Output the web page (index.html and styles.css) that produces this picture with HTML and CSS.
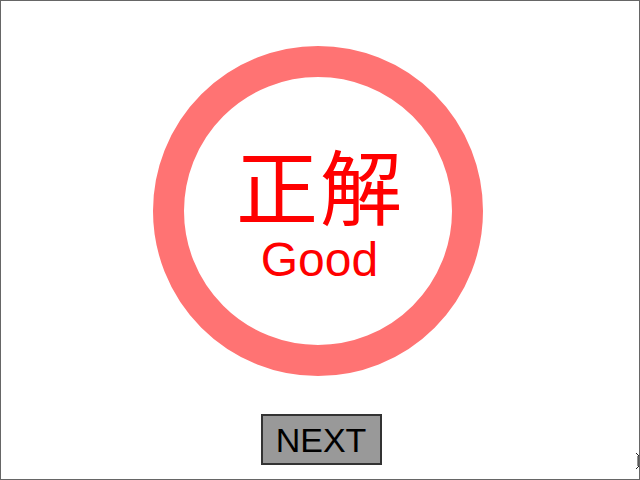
FILE: index.html
```html
<!DOCTYPE html>
<html lang="ja">
<head>
<meta charset="utf-8">
<title>正解</title>
<link rel="stylesheet" href="styles.css">
</head>
<body>
<div class="screen">
  <div class="ring">
    <div class="kanji">正解</div>
    <div class="good">Good</div>
  </div>
  <button class="next" type="button">NEXT</button>
  <svg class="cursor" width="6" height="18" viewBox="0 0 6 18" aria-hidden="true">
    <path d="M1 1 L4 4 L4 14 L1 17" fill="none" stroke="#222" stroke-width="1"/>
    <path d="M3 4 L3 14" stroke="#222" stroke-width="1"/>
  </svg>
</div>
</body>
</html>
```
FILE: styles.css
```css
html, body {
  margin: 0;
  padding: 0;
  background: #ffffff;
}
.screen {
  position: relative;
  width: 640px;
  height: 480px;
  box-sizing: border-box;
  border: 1px solid #666666;
  display: flex;
  flex-direction: column;
  align-items: center;
  overflow: hidden;
}
.ring {
  margin-top: 45px;
  margin-left: -4px;
  width: 330px;
  height: 330px;
  box-sizing: border-box;
  border: 31px solid #ff7373;
  border-radius: 50%;
  padding-top: 66px;
  display: flex;
  flex-direction: column;
  align-items: center;
  justify-content: flex-start;
}
.kanji {
  color: #ff0000;
  font-family: "Noto Sans CJK JP", sans-serif;
  font-weight: 400;
  font-size: 82px;
  line-height: 82px;
  letter-spacing: 2px;
  margin-left: 4px;
}
.good {
  color: #ff0000;
  font-family: "Liberation Sans", Arial, sans-serif;
  font-size: 48px;
  line-height: 50px;
  margin-top: 10px;
  margin-left: 3px;
}
.next {
  margin-top: 38px;
  margin-left: 2px;
  width: 121px;
  height: 51px;
  box-sizing: border-box;
  border: 2px solid #333333;
  background: #999999;
  color: #000000;
  font-family: "Liberation Sans", Arial, sans-serif;
  font-size: 34px;
  padding: 0;
  border-radius: 0;
  line-height: 49px;
}
.cursor {
  position: absolute;
  left: 634px;
  top: 451px;
}
```
